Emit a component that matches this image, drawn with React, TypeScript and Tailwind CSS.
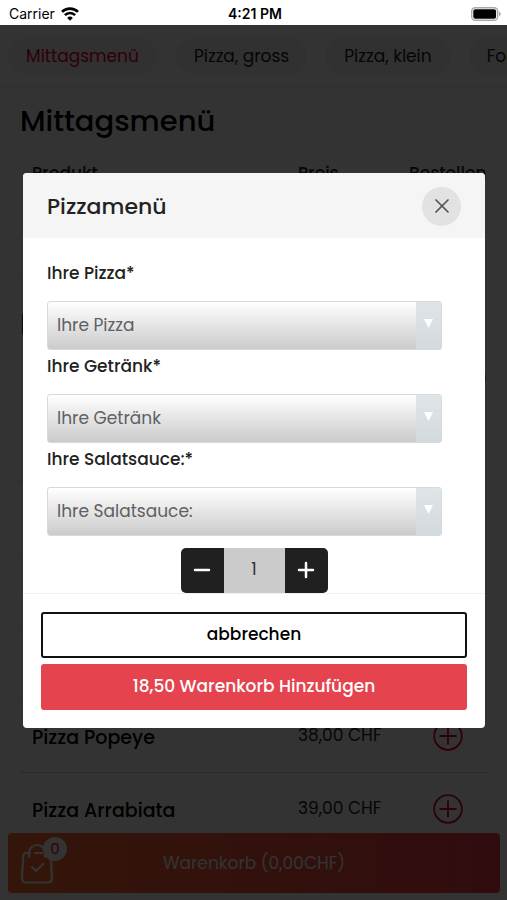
import React from "react";
import { Minus, Plus, X } from "lucide-react";

interface MenuItem {
  name: string;
  price: string;
}

interface MenuSectionProps {
  title: string;
  items: MenuItem[];
}

const categories = ["Mittagsmenü", "Pizza, gross", "Pizza, klein", "Food"];

const lunchMenu: MenuItem[] = [{ name: "Pizzamenü", price: "18,50 CHF" }];

const pizzas: MenuItem[] = [
  { name: "Pizza Margherita", price: "33,00 CHF" },
  { name: "Pizza Prosciutto", price: "36,00 CHF" },
  { name: "Pizza Funghi", price: "36,00 CHF" },
  { name: "Pizza Napoli", price: "37,00 CHF" },
  { name: "Pizza Popeye", price: "38,00 CHF" },
  { name: "Pizza Arrabiata", price: "39,00 CHF" },
];

const options = [
  { id: "pizza", label: "Ihre Pizza*", placeholder: "Ihre Pizza" },
  { id: "drink", label: "Ihre Getränk*", placeholder: "Ihre Getränk" },
  { id: "sauce", label: "Ihre Salatsauce:*", placeholder: "Ihre Salatsauce:" },
];

const StatusBar: React.FC = () => (
  <div className="relative z-30 grid h-[25px] shrink-0 grid-cols-3 items-center bg-white pl-[9px] pr-1.5 pt-0.5 font-['Inter',sans-serif] text-[14px] text-black">
    <div className="flex items-center gap-1.5">
      <span>Carrier</span>
      <svg className="h-[14px] w-[18px]" viewBox="0 0 18 14" fill="none" stroke="currentColor" strokeWidth="2.6">
        <path d="M1 4.9a11.3 11.3 0 0 1 16 0" />
        <path d="M3.9 8.1a7.2 7.2 0 0 1 10.2 0" />
        <path d="M9 13.8 6.2 10.9a4 4 0 0 1 5.6 0z" fill="currentColor" stroke="none" />
      </svg>
    </div>
    <span className="text-center font-semibold">4:21 PM</span>
    <svg className="h-[14px] w-[30px] justify-self-end" viewBox="0 0 30 14">
      <rect x="0.7" y="0.7" width="26" height="12.6" rx="3.5" fill="#fff" stroke="#a8a8a8" strokeWidth="1.4" />
      <rect x="2.3" y="2.3" width="22.8" height="9.4" rx="2" fill="#000" />
      <path d="M28 4.8c2.2.6 2.2 3.8 0 4.4z" fill="#a8a8a8" />
    </svg>
  </div>
);

const MenuSection: React.FC<MenuSectionProps> = ({ title, items }) => (
  <section className="px-5 pt-[15px]">
    <h2 className="text-[29px] font-medium leading-9 text-black">{title}</h2>
    <table className="mt-1 w-full table-fixed text-left">
      <thead>
        <tr className="h-[62px] text-[17px]">
          <th className="pl-3 font-medium">Produkt</th>
          <th className="w-[111px] font-medium">Preis</th>
          <th className="w-[78px] whitespace-nowrap font-medium">Bestellen</th>
        </tr>
      </thead>
      <tbody>
        {items.map((item) => (
          <tr key={item.name} className="h-[73px] border-b border-[#d4d4d4]">
            <td className="pl-3 pt-1 text-[19px] font-medium text-black">{item.name}</td>
            <td className="text-[17px] text-[#222]">{item.price}</td>
            <td className="pl-6">
              <button aria-label={`${item.name} bestellen`} className="block text-[#e4002b]">
                <svg className="h-[30px] w-[30px]" viewBox="0 0 30 30" fill="none" stroke="currentColor" strokeWidth="1.8">
                  <circle cx="15" cy="15" r="13.8" />
                  <path d="M15 6.5v17M6.5 15h17" />
                </svg>
              </button>
            </td>
          </tr>
        ))}
      </tbody>
    </table>
  </section>
);

const CartBar: React.FC = () => (
  <button className="fixed bottom-[7px] left-2 right-[7px] flex h-[60px] items-center justify-center rounded bg-linear-to-r from-[#ff6c30] to-[#f03c46] pt-0.5 text-[17px] text-white">
    Warenkorb (0,00CHF)
    <span className="absolute left-3 top-1">
      <svg className="h-[48px] w-[34px]" viewBox="0 0 34 48" fill="none" stroke="currentColor" strokeWidth="2.2" strokeLinecap="round" strokeLinejoin="round">
        <path d="M10 16H6q-2.600 0-2.800 3L2 41q0 4.500 4.500 4.500h21q4.500 0 4.500-4.500l-1.200-22q-.2-3-2.800-3M15 16h7" />
        <path d="M9 20v-4a8 8 0 0 1 16 0v4" />
        <path d="m12 30 4 4 7-7" />
      </svg>
      <span className="absolute left-[23px] top-0 flex size-6 items-center justify-center rounded-full bg-white text-[15px] text-[#e4002b]">
        0
      </span>
    </span>
  </button>
);

const ProductDialog: React.FC = () => {
  const [quantity, setQuantity] = React.useState(1);

  return (
    <div className="fixed inset-0 z-20 flex items-center bg-black/80 pl-[23px] pr-[22px]">
      <div role="dialog" aria-labelledby="dialog-title" className="w-full overflow-hidden rounded bg-white">
        <header className="flex h-[65px] items-center justify-between bg-[#f5f5f5] pl-6 pr-6 pt-0.5">
          <h1 id="dialog-title" className="text-[22px] font-medium">Pizzamenü</h1>
          <button aria-label="Schliessen" className="flex size-[39px] items-center justify-center rounded-full bg-[#e2e2e2] text-[#555]">
            <X className="size-6" strokeWidth={1.7} />
          </button>
        </header>

        <div className="pl-6 pr-[43px] pt-[19px]">
          {options.map((option) => (
            <div key={option.id}>
              <label htmlFor={option.id} className="block pb-4 pt-1 text-[17px] font-medium leading-6">
                {option.label}
              </label>
              <div className="relative">
                <select
                  id={option.id}
                  className="block h-[49px] w-full appearance-none rounded-[3px] border border-[#d5dadd] bg-linear-to-b from-white to-[#cbcbcb] pl-[9px] pr-8 pt-0.5 text-[17px] text-[#5d6064]"
                >
                  <option>{option.placeholder}</option>
                </select>
                <span className="pointer-events-none absolute inset-y-px right-px flex w-[25px] justify-center rounded-r-[2px] bg-linear-to-b from-[#dfe4e7] to-[#d3dade] pt-[17px]">
                  <svg className="h-[9px] w-[9px]" viewBox="0 0 9 9" fill="#fff">
                    <path d="M0 0h9L4.500 9z" />
                  </svg>
                </span>
              </div>
            </div>
          ))}
        </div>

        <div className="mx-auto mt-3 flex h-[45px] w-[147px] overflow-hidden rounded-[5px] text-white">
          <button aria-label="Weniger" onClick={() => setQuantity(Math.max(1, quantity - 1))} className="flex w-[43px] items-center justify-center bg-[#202020]">
            <Minus className="size-6" strokeWidth={2.5} />
          </button>
          <output className="flex flex-1 items-center justify-center bg-[#cbcbcb] text-[17px] text-[#333]">{quantity}</output>
          <button aria-label="Mehr" onClick={() => setQuantity(quantity + 1)} className="flex w-[43px] items-center justify-center bg-[#202020]">
            <Plus className="size-6" strokeWidth={2.5} />
          </button>
        </div>

        <footer className="flex flex-col gap-1.5 border-t border-[#f1f1f1] p-[18px] text-[17px] font-medium">
          <button className="h-[46px] rounded-[3px] border-2 border-[#111] text-black">abbrechen</button>
          <button className="h-[46px] rounded-[3px] bg-[#e5444f] text-white">18,50 Warenkorb Hinzufügen</button>
        </footer>
      </div>
    </div>
  );
};

export default function App() {
  return (
    <div className="flex h-screen flex-col overflow-hidden bg-white font-['Poppins','Inter',sans-serif] text-[#222]">
      <StatusBar />
      <nav className="flex h-[63px] shrink-0 items-center gap-[19px] border-b border-[#f0f0f0] px-2 text-[17px]">
        {categories.map((category, index) => (
          <a
            key={category}
            href="#"
            className={`flex h-[38px] shrink-0 items-center rounded-full bg-[#f3f3f3] px-[18px] pt-0.5 ${index === 0 ? "text-[#e4002b]" : "text-[#222]"}`}
          >
            {category}
          </a>
        ))}
      </nav>
      <main className="shrink-0">
        <MenuSection title="Mittagsmenü" items={lunchMenu} />
        <div className="mt-3">
          <MenuSection title="Pizza, gross" items={pizzas} />
        </div>
      </main>
      <CartBar />
      <ProductDialog />
    </div>
  );
}
